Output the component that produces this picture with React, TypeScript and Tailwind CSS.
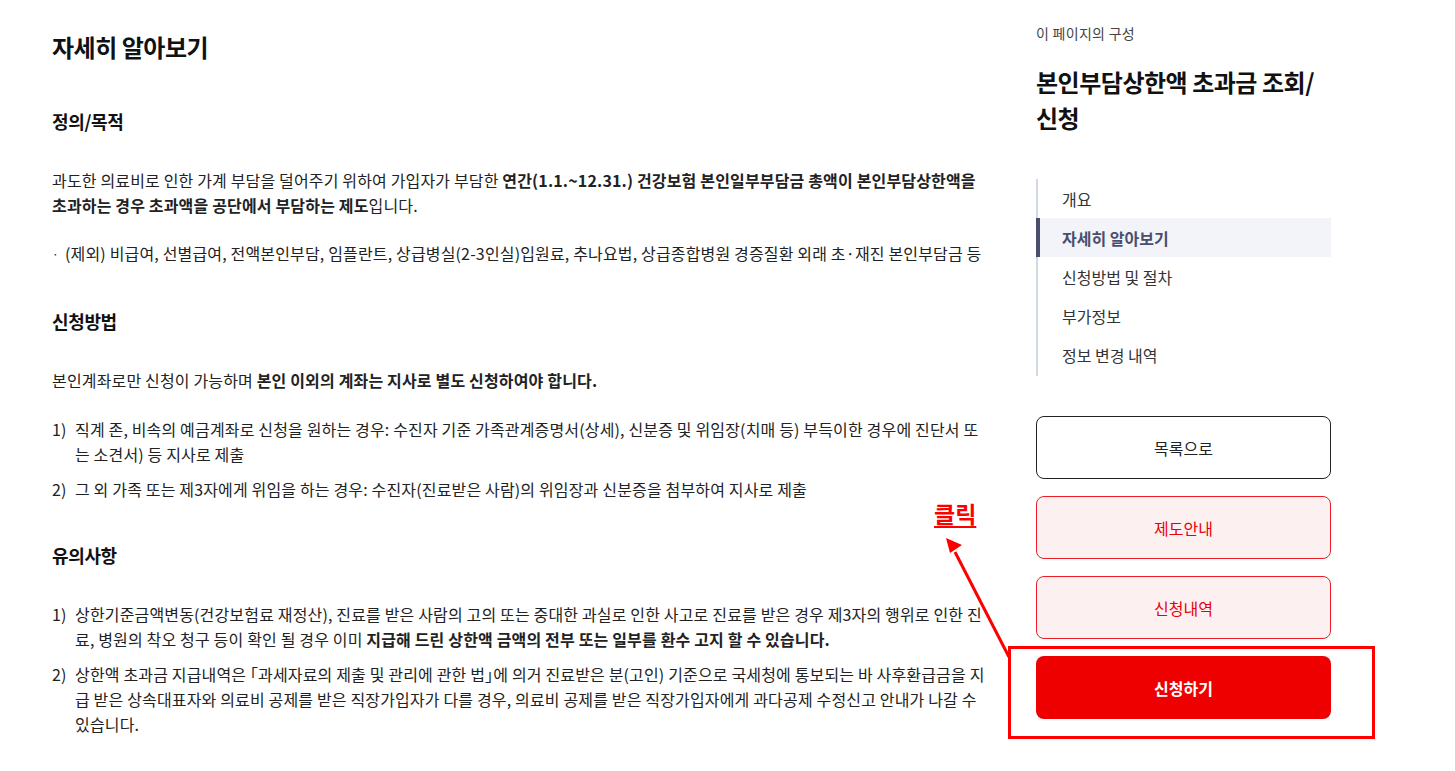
import React from "react";

const navItems = ["개요", "자세히 알아보기", "신청방법 및 절차", "부가정보", "정보 변경 내역"];

function NumItem({ n, children }: { n: string; children: React.ReactNode }) {
  return (
    <li className="flex">
      <span className="w-[23px] shrink-0">{n}</span>
      <span>{children}</span>
    </li>
  );
}

export default function App() {
  return (
    <div className="relative min-h-[771px] w-full overflow-hidden bg-white font-['Noto_Sans_CJK_KR','Noto_Sans',sans-serif] text-[#222]">
      <div className="flex pl-[52px]">
        {/* 본문 */}
        <main className="w-[940px] shrink-0 pt-[29px] text-[16px] leading-[25px] tracking-[0.01em]">
          <h2 className="text-[24px] font-bold leading-[36px] tracking-[-0.02em] text-[#111]">자세히 알아보기</h2>

          <h3 className="mt-[42px] text-[18px] font-bold leading-[28px] tracking-[-0.02em] text-[#111]">정의/목적</h3>
          <p className="mt-[33px]">
            과도한 의료비로 인한 가계 부담을 덜어주기 위하여 가입자가 부담한{" "}
            <b>연간(1.1.~12.31.) 건강보험 본인일부부담금 총액이 본인부담상한액을</b>
            <br />
            <b>초과하는 경우 초과액을 공단에서 부담하는 제도</b>입니다.
          </p>
          <p className="mt-[23px] flex">
            <span className="w-[13px] shrink-0 text-[12px]">·</span>
            <span>
              (제외) 비급여, 선별급여, 전액본인부담, 임플란트, 상급병실(2-3인실)입원료, 추나요법, 상급종합병원 경증질환 외래
              초·재진 본인부담금 등
            </span>
          </p>

          <h3 className="mt-[41px] text-[18px] font-bold leading-[28px] tracking-[-0.02em] text-[#111]">신청방법</h3>
          <p className="mt-[33px]">
            본인계좌로만 신청이 가능하며 <b>본인 이외의 계좌는 지사로 별도 신청하여야 합니다.</b>
          </p>
          <ol className="mt-[24px] flex flex-col gap-[10px]">
            <NumItem n="1)">
              직계 존, 비속의 예금계좌로 신청을 원하는 경우: 수진자 기준 가족관계증명서(상세), 신분증 및 위임장(치매 등) 부득이한
              경우에 진단서 또
              <br />는 소견서) 등 지사로 제출
            </NumItem>
            <NumItem n="2)">그 외 가족 또는 제3자에게 위임을 하는 경우: 수진자(진료받은 사람)의 위임장과 신분증을 첨부하여 지사로 제출</NumItem>
          </ol>

          <h3 className="mt-[39px] text-[18px] font-bold leading-[28px] tracking-[-0.02em] text-[#111]">유의사항</h3>
          <ol className="mt-[33px] flex flex-col gap-[10px]">
            <NumItem n="1)">
              상한기준금액변동(건강보험료 재정산), 진료를 받은 사람의 고의 또는 중대한 과실로 인한 사고로 진료를 받은 경우 제3자의 행위로 인한 진
              <br />
              료, 병원의 착오 청구 등이 확인 될 경우 이미 <b>지급해 드린 상한액 금액의 전부 또는 일부를 환수 고지 할 수 있습니다.</b>
            </NumItem>
            <NumItem n="2)">
              상한액 초과금 지급내역은 ｢과세자료의 제출 및 관리에 관한 법｣에 의거 진료받은 분(고인) 기준으로 국세청에 통보되는 바 사후환급금을 지
              <br />
              급 받은 상속대표자와 의료비 공제를 받은 직장가입자가 다를 경우, 의료비 공제를 받은 직장가입자에게 과다공제 수정신고 안내가 나갈 수
              <br />
              있습니다.
            </NumItem>
          </ol>
        </main>

        {/* 사이드바 */}
        <aside className="ml-[44px] w-[295px] shrink-0 pt-[23px]">
          <p className="text-[14px] leading-[20px] tracking-[0.02em] text-[#444]">이 페이지의 구성</p>
          <h2 className="mt-[21px] text-[24px] font-bold leading-[36px] tracking-[-0.02em] text-[#111]">
            본인부담상한액 초과금 조회/
            <br />
            신청
          </h2>

          <nav className="mt-[43px] border-l-2 border-[#d3d9e3] pb-[2px]">
            {navItems.map((item) =>
              item === "자세히 알아보기" ? (
                <div
                  key={item}
                  className="-ml-[2px] flex h-[39px] items-center border-l-4 border-[#4a4e6d] bg-[#f3f4f9] pl-[22px] text-[16px] font-semibold text-[#4a4e6d]"
                >
                  {item}
                </div>
              ) : (
                <div key={item} className="flex h-[39px] items-center pl-[24px] text-[16px] text-[#333]">
                  {item}
                </div>
              )
            )}
          </nav>

          <div className="mt-[40px] flex flex-col gap-[17px]">
            <button className="h-[63px] rounded-[8px] border border-[#222] bg-white text-[16px] text-[#222]">목록으로</button>
            <button className="h-[63px] rounded-[8px] border border-[#ee1c25] bg-[#fdf0f0] text-[16px] text-[#e8000b]">제도안내</button>
            <button className="h-[63px] rounded-[8px] border border-[#ee1c25] bg-[#fdf0f0] text-[16px] text-[#e8000b]">신청내역</button>
            <div className="relative">
              <button className="h-[63px] w-full rounded-[8px] bg-[#ee0000] text-[16px] font-semibold text-white">신청하기</button>
              {/* 강조 표시 */}
              <div className="absolute -left-[28px] -right-[44px] -top-[10px] -bottom-[20px] border-[3px] border-[#ff0000]" />
            </div>
          </div>
        </aside>
      </div>

      {/* 클릭 안내 화살표 */}
      <span className="absolute left-[934px] top-[498px] text-[23px] font-bold leading-[30px] text-[#ff0000] underline underline-offset-[3px]">
        클릭
      </span>
      <svg className="absolute left-0 top-0" width="1455" height="771" viewBox="0 0 1455 771" fill="none">
        <line x1="1009" y1="657" x2="955" y2="552" stroke="#ff0000" strokeWidth="3" />
        <polygon points="946,538 962,545 950,553" fill="#ff0000" />
      </svg>
    </div>
  );
}
